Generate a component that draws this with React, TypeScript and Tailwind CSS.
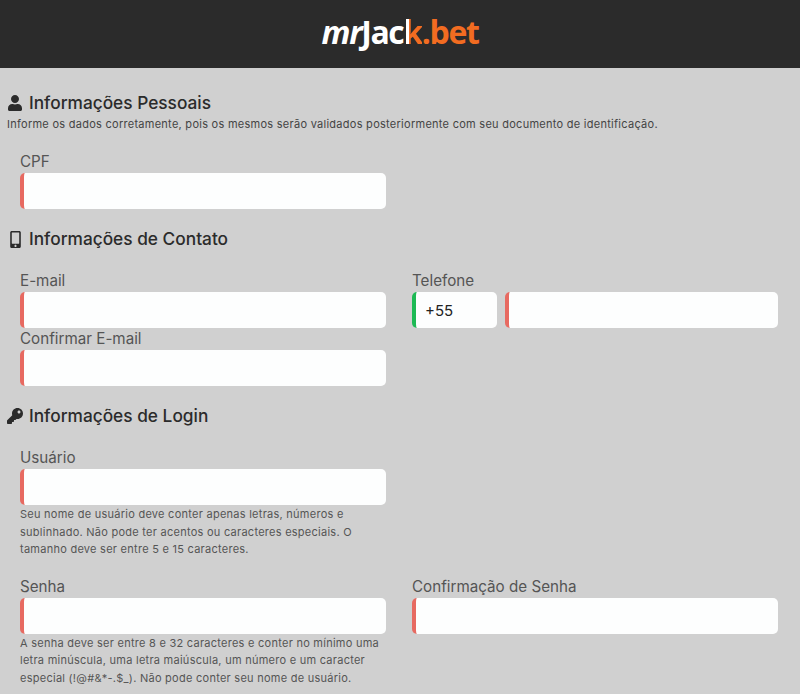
import { FaKey, FaMobileAlt, FaUser } from "react-icons/fa";
import type { ReactNode } from "react";

function Field({ label, defaultValue, ok }: { label?: string; defaultValue?: string; ok?: boolean }) {
  return (
    <input
      type="text"
      aria-label={label}
      defaultValue={defaultValue}
      className={`h-9 w-full min-w-0 rounded-[5px] border-l-[4px] bg-[#fdfefe] pl-[9px] text-[15px] text-[#222] outline-none ${
        ok ? "border-[#1db954]" : "border-[#e76a61]"
      }`}
    />
  );
}

function Label({ children }: { children: ReactNode }) {
  return <label className="block h-[22px] text-[15.2px] leading-[21px] text-[#555]">{children}</label>;
}

function Help({ children }: { children: ReactNode }) {
  return <p className="mt-[1px] text-[11px] leading-[17.5px] tracking-[0.26px] text-[#555]">{children}</p>;
}

function Heading({ icon, children }: { icon: ReactNode; children: ReactNode }) {
  return (
    <h2 className="flex h-[22px] items-center pl-[7px] text-[17.3px] leading-[22px] font-medium text-[#2b2b2b]">
      <span className="flex w-[22px] shrink-0 items-center justify-start text-[#2b2b2b]">{icon}</span>
      {children}
    </h2>
  );
}

export default function App() {
  return (
    <div className="h-[694px] overflow-hidden bg-[#d0d0d0] font-['Inter',sans-serif]">
      <header className="flex h-[68px] items-center justify-center bg-[#2b2b2b] pb-1">
        <div className="flex items-baseline font-['Open_Sans',sans-serif] text-[32px] leading-none font-bold tracking-[-1.4px]">
          <span className="text-white italic">mr</span>
          <span className="text-white">Jac</span>
          <span className="bg-[linear-gradient(90deg,#fff_32%,#f26c21_32%)] bg-clip-text text-transparent">k</span>
          <span className="text-[#f26c21]">.bet</span>
        </div>
      </header>

      <main>
        <section className="pt-6">
          <Heading icon={<FaUser size={16} />}>Informações Pessoais</Heading>
          <p className="mt-[2px] pl-[7px] text-[11px] leading-[17px] tracking-[0.27px] text-[#444]">
            Informe os dados corretamente, pois os mesmos serão validados posteriormente com seu documento de identificação.
          </p>
          <div className="mt-[18px] grid grid-cols-2 gap-x-[26px] pr-[22px] pl-5">
            <div>
              <Label>CPF</Label>
              <Field label="CPF" />
            </div>
          </div>
        </section>

        <section className="pt-[19px]">
          <Heading icon={<FaMobileAlt size={17} />}>Informações de Contato</Heading>
          <div className="mt-[20px] grid grid-cols-2 gap-x-[26px] gap-y-0 pr-[22px] pl-5">
            <div>
              <Label>E-mail</Label>
              <Field label="E-mail" />
            </div>
            <div>
              <Label>Telefone</Label>
              <div className="flex gap-2">
                <div className="w-[85px] shrink-0">
                  <Field label="DDI" defaultValue="+55" ok />
                </div>
                <Field label="Telefone" />
              </div>
            </div>
            <div>
              <Label>Confirmar E-mail</Label>
              <Field label="Confirmar E-mail" />
            </div>
          </div>
        </section>

        <section className="pt-[19px]">
          <Heading icon={<FaKey size={16} />}>Informações de Login</Heading>
          <div className="mt-[20px] grid grid-cols-2 gap-x-[26px] pr-[22px] pl-5">
            <div>
              <Label>Usuário</Label>
              <Field label="Usuário" />
              <Help>
                Seu nome de usuário deve conter apenas letras, números e sublinhado. Não pode ter acentos ou caracteres especiais. O tamanho deve ser entre 5 e 15 caracteres.
              </Help>
            </div>
            <div className="col-start-1 mt-[17px]">
              <Label>Senha</Label>
              <Field label="Senha" />
              <Help>
                A senha deve ser entre 8 e 32 caracteres e conter no mínimo uma letra minúscula, uma letra maiúscula, um número e um caracter especial (!@#&*-.$_). Não pode conter seu nome de usuário.
              </Help>
            </div>
            <div className="mt-[17px]">
              <Label>Confirmação de Senha</Label>
              <Field label="Confirmação de Senha" />
            </div>
          </div>
        </section>
      </main>
    </div>
  );
}
